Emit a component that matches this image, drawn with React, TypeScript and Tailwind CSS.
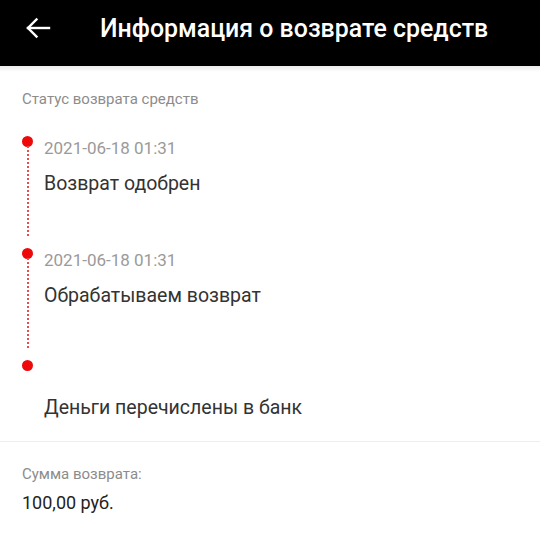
import React from "react";

const steps = [
  { time: "2021-06-18 01:31", title: "Возврат одобрен", line: true },
  { time: "2021-06-18 01:31", title: "Обрабатываем возврат", line: true },
  { time: "", title: "Деньги перечислены в банк", line: false },
];

function BackArrow() {
  return (
    <svg width="26" height="22" viewBox="0 0 26 22" fill="none" stroke="white" strokeWidth="2.4" strokeLinecap="square">
      <path d="M3 11H24" />
      <path d="M11.5 2.5L3 11L11.5 19.5" />
    </svg>
  );
}

function Step({ time, title, line }: { time: string; title: string; line: boolean }) {
  return (
    <div className="relative h-[112px] pl-[44px]">
      <div className="absolute left-[22px] top-[-0.5px] w-[11px] h-[11px] rounded-full bg-[#ee0a0a]" />
      {line && (
        <div className="absolute left-[27px] top-[10px] h-[90px] border-l-2 border-dotted border-[#e84c4c]" />
      )}
      <div className="h-[24px] text-[17px] leading-[24px] text-[#9a9a9a]">{time}</div>
      <div className="mt-[12px] text-[19.5px] leading-[24px] text-[#333333]">{title}</div>
    </div>
  );
}

export default function App() {
  return (
    <div className="w-[540px] h-[536px] bg-white overflow-hidden" style={{ fontFamily: "Roboto, 'Noto Sans', sans-serif" }}>
      <header className="h-[66px] bg-black flex items-center">
        <div className="w-[100px] pl-[25px] -mt-[10px]">
          <BackArrow />
        </div>
        <h1 className="text-white text-[24.9px] font-medium -mt-[9px]">Информация о возврате средств</h1>
      </header>
      <div className="h-[6px] bg-gradient-to-b from-[#ececec] to-white" />
      <div className="pt-[17px] pl-[22px] text-[15px] leading-[20px] text-[#8c8c8c]">Статус возврата средств</div>
      <div className="mt-[27px]">
        {steps.map((s, i) => (
          <Step key={i} {...s} />
        ))}
      </div>
      <div className="-mt-[31px] border-t border-[#eeeeee]" />
      <div className="pt-[22px] pl-[22px] text-[15px] leading-[20px] text-[#8c8c8c]">Сумма возврата:</div>
      <div className="pt-[7px] pl-[22px] text-[18px] leading-[24px] text-[#222222]">100,00 руб.</div>
    </div>
  );
}
